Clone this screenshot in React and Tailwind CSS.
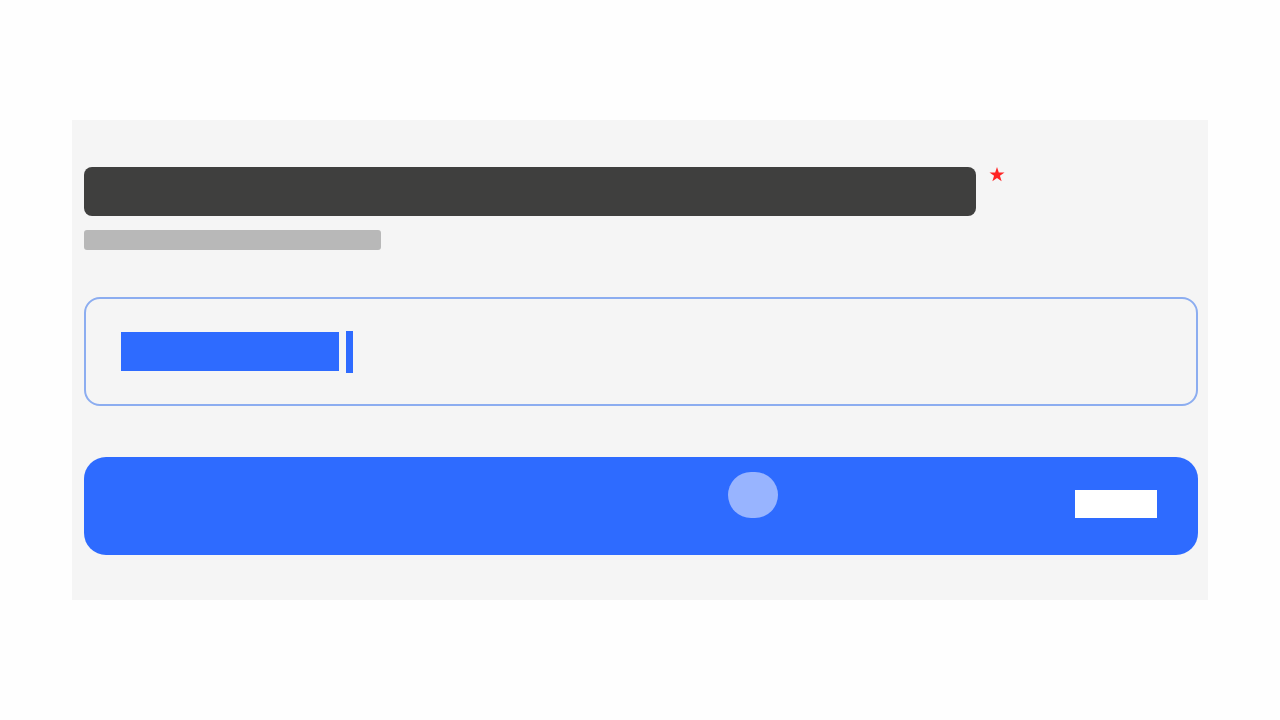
export default function App() {
  return (
    <div className="w-[1280px] h-[720px] bg-[#fefefe] pt-[120px]" style={{ fontFamily: '"Liberation Sans", Arial, sans-serif' }}>
      <div className="ml-[72px] w-[1136px] h-[480px] bg-[#f5f5f5] pl-[12px] pt-[47px]">
        <div className="flex items-start">
          <div className="w-[892px] h-[49px] rounded-[8px] bg-[#3f3f3e]" />
          <svg className="ml-[13px] mt-[0px]" width="16" height="15" viewBox="0 0 24 23">
            <polygon points="12,0 14.8,8.3 23.5,8.3 16.5,13.5 19.1,22 12,16.8 4.9,22 7.5,13.5 0.5,8.3 9.2,8.3" fill="#ff2424" />
          </svg>
        </div>
        <div className="mt-[14px] w-[297px] h-[20px] rounded-[3px] bg-[#b8b8b8]" />
        <div className="mt-[47px] w-[1114px] h-[109px] rounded-[16px] border-2 border-[#8cadf0] flex items-start pl-[35px] pt-[32px]">
          <div className="w-[218px] h-[39px] bg-[#2e6bff] mt-[1px]" />
          <div className="ml-[7px] w-[7px] h-[42px] bg-[#2e6bff]" />
        </div>
        <div className="mt-[51px] w-[1114px] h-[98px] rounded-[22px] bg-[#2e6bff] flex items-start">
          <div className="ml-[644px] mt-[15px] w-[50px] h-[46px] rounded-full bg-[#98b4ff]" />
          <div className="ml-[297px] mt-[33px] w-[82px] h-[28px] bg-white" />
        </div>
      </div>
    </div>
  );
}
